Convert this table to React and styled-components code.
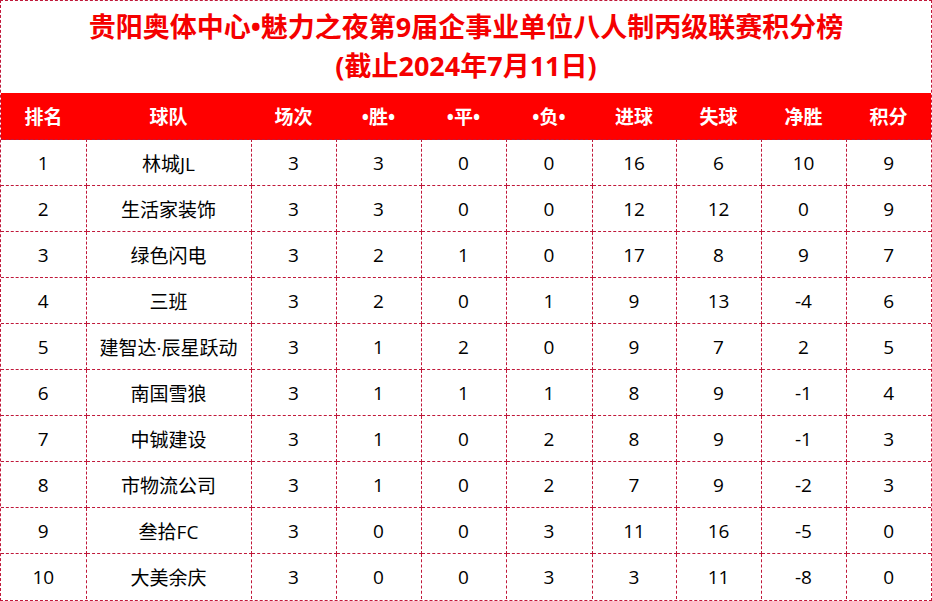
import styled, { createGlobalStyle } from "styled-components";

const GlobalStyle = createGlobalStyle`
  html, body {
    margin: 0;
    padding: 0;
    background: #fff;
  }
  body {
    font-family: "Open Sans", "Noto Sans CJK SC", sans-serif;
  }
`;

const Board = styled.div`
  width: 932px;
  height: 601px;
  box-sizing: border-box;
  border: 1px dashed #c0183a;
  background: #fff;
  overflow: hidden;
`;

const Title = styled.h1`
  margin: 0;
  height: 92px;
  box-sizing: border-box;
  padding-top: 6px;
  text-align: center;
  color: #f50000;
  font-family: "Open Sans", "Noto Sans CJK SC", sans-serif;
  font-size: 27px;
  font-weight: 700;
  line-height: 39px;
`;

const Table = styled.table`
  width: 930px;
  border-collapse: collapse;
  table-layout: fixed;
`;

const HeadCell = styled.th`
  height: 46px;
  padding: 0;
  background: #ff0000;
  color: #fff;
  font-size: 19px;
  font-weight: 700;
  text-align: center;
`;

const Cell = styled.td`
  height: 45px;
  padding: 0;
  border: 1px dashed #c0183a;
  color: #000;
  font-size: 19px;
  text-align: center;
  &:first-child {
    border-left: none;
  }
  &:last-child {
    border-right: none;
  }
`;

const Row = styled.tr`
  &:last-child td {
    border-bottom: none;
  }
`;

const headers = ["排名", "球队", "场次", "•胜•", "•平•", "•负•", "进球", "失球", "净胜", "积分"];

const rows = [
  [1, "林城JL", 3, 3, 0, 0, 16, 6, 10, 9],
  [2, "生活家装饰", 3, 3, 0, 0, 12, 12, 0, 9],
  [3, "绿色闪电", 3, 2, 1, 0, 17, 8, 9, 7],
  [4, "三班", 3, 2, 0, 1, 9, 13, -4, 6],
  [5, "建智达·辰星跃动", 3, 1, 2, 0, 9, 7, 2, 5],
  [6, "南国雪狼", 3, 1, 1, 1, 8, 9, -1, 4],
  [7, "中铖建设", 3, 1, 0, 2, 8, 9, -1, 3],
  [8, "市物流公司", 3, 1, 0, 2, 7, 9, -2, 3],
  [9, "叁拾FC", 3, 0, 0, 3, 11, 16, -5, 0],
  [10, "大美余庆", 3, 0, 0, 3, 3, 11, -8, 0],
];

const widths = [85, 165, 85, 85, 85, 86, 84, 85, 85, 85];

export default function App() {
  return (
    <>
      <GlobalStyle />
      <Board>
        <Title>
          贵阳奥体中心•魅力之夜第9届企事业单位八人制丙级联赛积分榜
          <br />
          (截止2024年7月11日)
        </Title>
        <Table>
          <colgroup>
            {widths.map((w, i) => (
              <col key={i} style={{ width: w }} />
            ))}
          </colgroup>
          <thead>
            <tr>
              {headers.map((h) => (
                <HeadCell key={h}>{h}</HeadCell>
              ))}
            </tr>
          </thead>
          <tbody>
            {rows.map((r) => (
              <Row key={r[0]}>
                {r.map((v, i) => (
                  <Cell key={i}>{v}</Cell>
                ))}
              </Row>
            ))}
          </tbody>
        </Table>
      </Board>
    </>
  );
}
